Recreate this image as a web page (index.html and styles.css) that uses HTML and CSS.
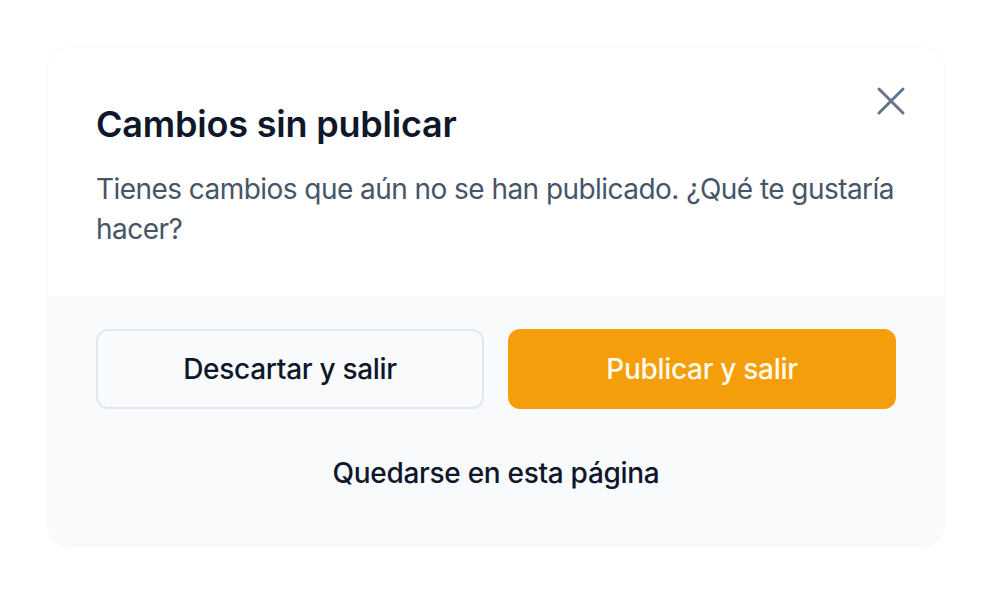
FILE: index.html
```html
<!DOCTYPE html>
<html lang="es">
<head>
<meta charset="utf-8">
<title>Cambios sin publicar</title>
<link rel="stylesheet" href="styles.css">
</head>
<body>
<div class="page">
  <div class="dialog" role="dialog" aria-labelledby="dlg-title">
    <button class="close" aria-label="Cerrar">
      <svg width="48" height="48" viewBox="0 0 24 24" fill="none" stroke="currentColor" stroke-width="1.5" stroke-linecap="round" stroke-linejoin="round"><path d="M18 6 6 18"/><path d="m6 6 12 12"/></svg>
    </button>
    <div class="body">
      <h2 id="dlg-title" class="title">Cambios sin publicar</h2>
      <p class="text">Tienes cambios que aún no se han publicado. ¿Qué te gustaría hacer?</p>
    </div>
    <div class="footer">
      <div class="actions">
        <button class="btn btn-outline">Descartar y salir</button>
        <button class="btn btn-primary">Publicar y salir</button>
      </div>
      <button class="btn btn-link">Quedarse en esta página</button>
    </div>
  </div>
</div>
</body>
</html>
```
FILE: styles.css
```css
* { box-sizing: border-box; }
html, body { margin: 0; padding: 0; background: #ffffff; }
body {
  font-family: Inter, "Noto Sans", "Liberation Sans", sans-serif;
  width: 992px;
  height: 592px;
}
.page {
  padding: 48px;
}
.dialog {
  position: relative;
  width: 896px;
  background: #ffffff;
  border-radius: 20px;
  box-shadow: 0 1px 3px rgba(15, 23, 42, 0.04), 0 0 0 1px rgba(15, 23, 42, 0.015);
  overflow: hidden;
}
.close {
  position: absolute;
  top: 29px;
  right: 29px;
  width: 48px;
  height: 48px;
  padding: 0;
  border: 0;
  background: transparent;
  color: #64748b;
  display: flex;
  align-items: center;
  justify-content: center;
  cursor: pointer;
}
.close svg { display: block; }
.body {
  padding: 48px 48px 47px;
}
.title {
  margin: 0;
  font-size: 36px;
  line-height: 56px;
  font-weight: 600;
  color: #0f172a;
  letter-spacing: -0.2px;
}
.text {
  margin: 17px -24px 0 0;
  font-size: 28px;
  line-height: 40px;
  color: #475569;
  font-weight: 400;
  letter-spacing: -0.55px;
}
.footer {
  background: #f8fafc;
  padding: 33px 48px 32px;
  display: flex;
  flex-direction: column;
  gap: 24px;
}
.actions {
  display: grid;
  grid-template-columns: 1fr 1fr;
  gap: 24px;
}
.btn {
  height: 80px;
  border-radius: 12px;
  font-family: inherit;
  font-size: 28px;
  font-weight: 500;
  letter-spacing: -0.3px;
  cursor: pointer;
  display: flex;
  align-items: center;
  justify-content: center;
}
.btn-outline {
  background: #f8fafc;
  border: 2px solid #e2e8f0;
  color: #0f172a;
}
.btn-primary {
  background: #f59e0b;
  border: 0;
  color: #fffbeb;
}
.btn-link {
  background: transparent;
  border: 0;
  color: #0f172a;
}
```
